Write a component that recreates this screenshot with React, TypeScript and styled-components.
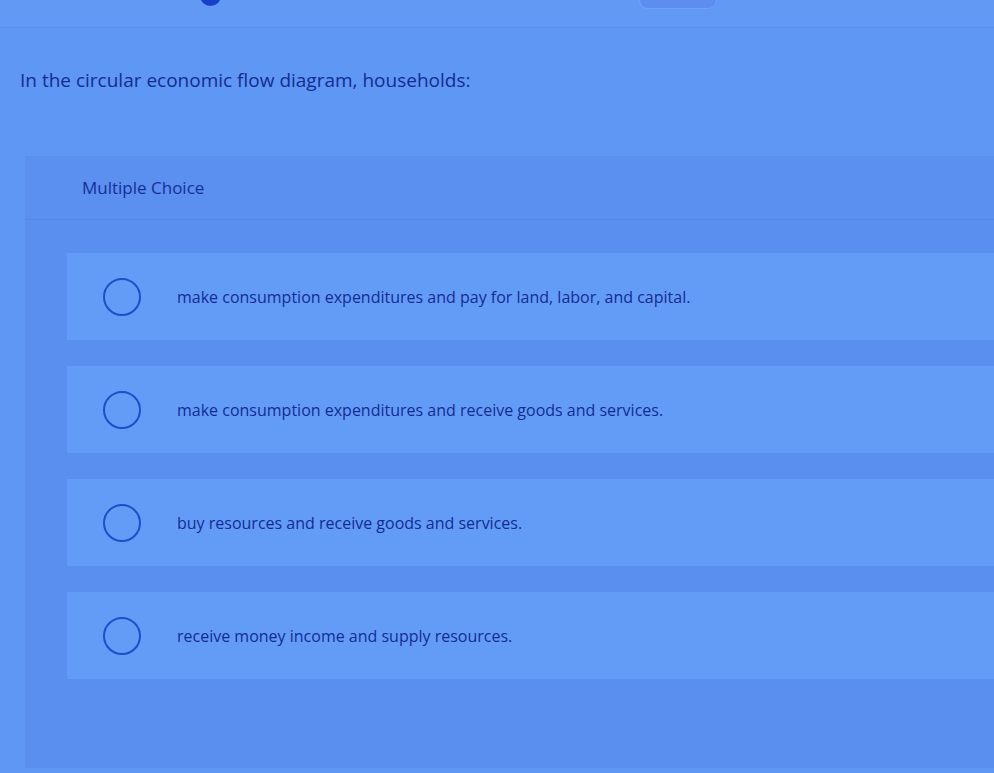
import React from "react";
import styled, { createGlobalStyle } from "styled-components";

const GlobalStyle = createGlobalStyle`
  html, body {
    margin: 0;
    padding: 0;
    background: #5f97f4;
    overflow: hidden;
  }
  body {
    font-family: "Open Sans", Lato, "Liberation Sans", sans-serif;
    color: #14319c;
  }
`;

const options = [
  "make consumption expenditures and pay for land, labor, and capital.",
  "make consumption expenditures and receive goods and services.",
  "buy resources and receive goods and services.",
  "receive money income and supply resources.",
];

function App() {
  return (
    <Page>
      <GlobalStyle />
      <TopBar>
        <Points>
          <HelpDot />
        </Points>
        <TopButton />
      </TopBar>
      <Question>In the circular economic flow diagram, households:</Question>
      <Panel>
        <PanelHeader>Multiple Choice</PanelHeader>
        <OptionList>
          {options.map((text) => (
            <OptionCard key={text}>
              <Radio />
              <OptionText>{text}</OptionText>
            </OptionCard>
          ))}
        </OptionList>
      </Panel>
    </Page>
  );
}

const Page = styled.div`
  width: 994px;
  height: 773px;
  display: flex;
  flex-direction: column;
  background: #5f97f4;
`;

const TopBar = styled.header`
  height: 27px;
  flex-shrink: 0;
  display: flex;
  align-items: flex-start;
  overflow: hidden;
  border-bottom: 1px solid #5a8fe8;
  background: #6199f5;
`;

const Points = styled.div`
  display: flex;
  align-items: center;
  width: 640px;
  padding-left: 200px;
  box-sizing: border-box;
  margin-top: -15px;
`;

const HelpDot = styled.span`
  width: 21px;
  height: 21px;
  border-radius: 50%;
  background: #1840c8;
`;

const TopButton = styled.div`
  width: 76px;
  height: 16px;
  margin-top: -8px;
  border-radius: 8px;
  background: #5d8eef;
  box-shadow: 0 0 0 1px #6ea2f7;
`;

const Question = styled.h1`
  margin: 0;
  padding: 39px 0 0 20px;
  height: 89px;
  box-sizing: border-box;
  font-size: 19px;
  font-weight: 400;
  color: #132c92;
`;

const Panel = styled.section`
  margin-left: 25px;
  height: 612px;
  margin-top: 39px;
  background: #5a8ff0;
  display: flex;
  flex-direction: column;
`;

const PanelHeader = styled.div`
  height: 64px;
  box-sizing: border-box;
  padding: 20px 0 0 57px;
  font-size: 17px;
  background: #5b8ff0;
  border-bottom: 1px solid #5889ea;
  color: #152f96;
`;

const OptionList = styled.div`
  display: flex;
  flex-direction: column;
  gap: 26px;
  padding: 33px 0 0 42px;
`;

const OptionCard = styled.div`
  height: 87px;
  display: flex;
  align-items: center;
  gap: 36px;
  padding-left: 36px;
  background: #639cf7;
`;

const Radio = styled.span`
  width: 34px;
  height: 34px;
  flex-shrink: 0;
  border-radius: 50%;
  border: 2px solid #1b4fcb;
`;

const OptionText = styled.span`
  font-size: 16px;
  color: #132c92;
`;

export default App;
